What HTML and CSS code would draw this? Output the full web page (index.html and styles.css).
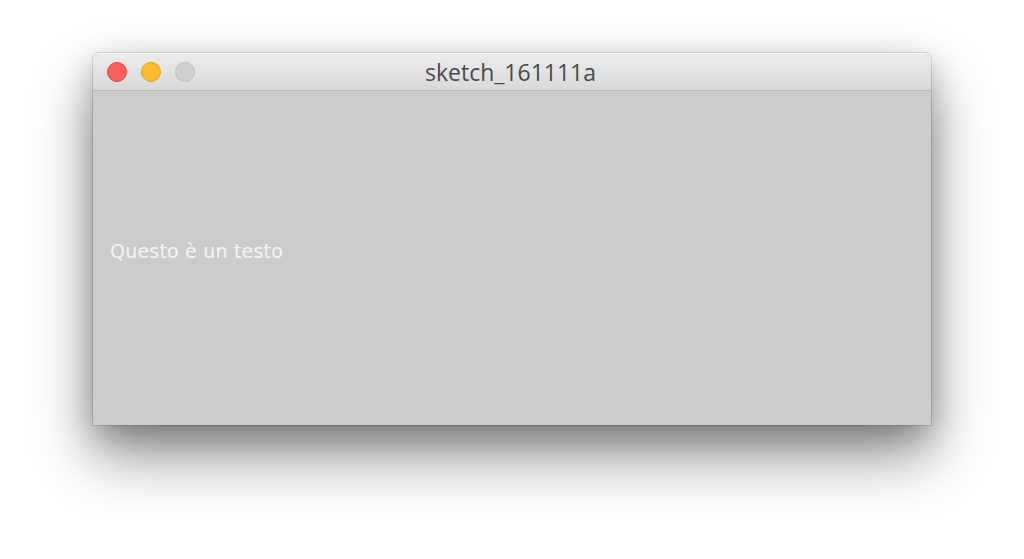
FILE: index.html
```html
<!DOCTYPE html>
<html>
<head>
<meta charset="utf-8">
<link rel="stylesheet" href="styles.css">
</head>
<body>
<div class="desk">
  <div class="window">
    <div class="titlebar">
      <div class="lights">
        <span class="light red"></span>
        <span class="light yellow"></span>
        <span class="light gray"></span>
      </div>
      <div class="title">sketch_161111a</div>
    </div>
    <div class="content">
      <div class="text">Questo è un testo</div>
    </div>
  </div>
</div>
</body>
</html>
```
FILE: styles.css
```css
html, body {
  margin: 0;
  padding: 0;
  background: #ffffff;
  width: 1024px;
  height: 559px;
  overflow: hidden;
}
.desk {
  padding: 53px 0 0 93px;
}
.window {
  width: 838px;
  height: 372px;
  display: flex;
  flex-direction: column;
  border-radius: 6px 6px 0 0;
  background: #cccccc;
  box-shadow: 0 0 0 1px rgba(0,0,0,0.12), 0 30px 60px rgba(0,0,0,0.45), 0 10px 30px rgba(0,0,0,0.2);
  overflow: hidden;
}
.titlebar {
  position: relative;
  height: 36px;
  flex: none;
  background: linear-gradient(#ececec, #d9d9d9);
  border-top: 1px solid #f4f4f4;
  border-bottom: 1px solid #bdbdbd;
  display: flex;
  align-items: center;
  justify-content: center;
}
.lights {
  position: absolute;
  left: 14px;
  top: 8px;
  display: flex;
  gap: 14px;
}
.light {
  width: 20px;
  height: 20px;
  border-radius: 50%;
  box-sizing: border-box;
}
.red { background: #fc5f57; border: 1px solid #e0443e; }
.yellow { background: #fdbc2e; border: 1px solid #dea123; }
.gray { background: #d0d0d0; border: 1px solid #bfbfbf; }
.title {
  font-family: "Open Sans", "Liberation Sans", sans-serif;
  font-size: 23px;
  color: #4a4a4a;
  margin-right: 3px;
}
.content {
  flex: 1;
  display: flex;
  align-items: center;
  padding-left: 17px;
  padding-bottom: 14px;
}
.text {
  font-family: "DejaVu Sans", sans-serif;
  font-size: 19px;
  letter-spacing: 0.2px;
  color: #f4f4f4;
}
```
